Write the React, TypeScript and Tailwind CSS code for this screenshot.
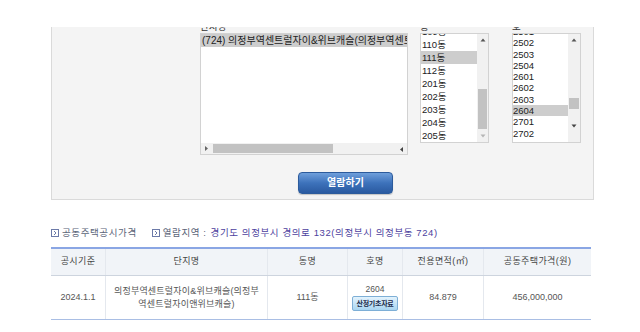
const dongs = ["109동", "110동", "111동", "112동", "201동", "202동", "203동", "204동", "205동", "206동"];
const hos = ["2501", "2502", "2503", "2504", "2601", "2602", "2603", "2604", "2701", "2702", "2703", "2704"];

function UpArrow({ color = "#555" }: { color?: string }) {
  return (
    <svg width="6" height="4" viewBox="0 0 6 4">
      <polygon points="3,0.5 5.5,3.5 0.5,3.5" fill={color} />
    </svg>
  );
}

function DownArrow({ color = "#555" }: { color?: string }) {
  return (
    <svg width="6" height="4" viewBox="0 0 6 4">
      <polygon points="0.5,0.5 5.5,0.5 3,3.5" fill={color} />
    </svg>
  );
}

function BoxIcon() {
  return (
    <svg width="8" height="8" viewBox="0 0 8 8" className="shrink-0">
      <rect x="0.5" y="0.5" width="7" height="7" fill="#fff" stroke="#6c7aa8" />
      <polyline points="3,2 5,4 3,6" fill="none" stroke="#6c7aa8" strokeWidth="1" />
    </svg>
  );
}

export default function App() {
  return (
    <div className="w-[640px] h-[332px] overflow-hidden bg-white font-['Liberation_Sans','Noto_Sans_CJK_KR',sans-serif]">
      <div className="h-[27px]" />

      {/* search panel */}
      <div className="ml-[51px] w-[543px] h-[173px] bg-[#f4f4f4] border-x border-b border-[#dadada] overflow-hidden">
        <div className="flex pl-[148px] -mt-[6px]">
          {/* 단지명 */}
          <div className="w-[208px]">
            <div className="h-[12px] text-[9.5px] leading-[12px] text-[#333]">단지명</div>
            <div className="h-[122px] border border-[#d2d2d2] bg-white">
              <div className="h-[109px] overflow-hidden">
                <div className="h-[13px] bg-[#cdcdcd] text-[10px] leading-[13px] text-[#222] whitespace-nowrap pl-px">
                  (724) 의정부역센트럴자이&amp;위브캐슬(의정부역센트럴자이앤위브캐슬)
                </div>
              </div>
              <div className="h-[11px] bg-[#f1f1f1] flex items-center">
                <div className="w-[11px] flex justify-center -rotate-90">
                  <DownArrow color="#666" />
                </div>
                <div className="ml-[1px] w-[120px] h-[9px] bg-[#c2c2c2]" />
                <div className="flex-1" />
                <div className="w-[11px] flex justify-center rotate-90">
                  <DownArrow color="#444" />
                </div>
              </div>
            </div>
          </div>

          {/* 동 */}
          <div className="ml-[12px] w-[69px]">
            <div className="h-[12px] text-[9.5px] leading-[12px] text-[#333]">동</div>
            <div className="h-[110px] border border-[#d2d2d2] bg-white flex">
              <div className="flex-1 overflow-hidden">
                <div className="-mt-[9px]">
                  {dongs.map((d) => (
                    <div
                      key={d}
                      className={`h-[13px] text-[9.5px] leading-[13px] text-[#222] pl-px ${
                        d === "111동" ? "bg-[#cdcdcd]" : ""
                      }`}
                    >
                      {d}
                    </div>
                  ))}
                </div>
              </div>
              <div className="w-[11px] bg-[#f1f1f1] flex flex-col items-center">
                <div className="h-[12px] flex items-center">
                  <UpArrow color="#555" />
                </div>
                <div className="mt-[43px] w-[9px] h-[40px] bg-[#c2c2c2]" />
                <div className="flex-1 flex items-center">
                  <DownArrow color="#b5b5b5" />
                </div>
              </div>
            </div>
          </div>

          {/* 호 */}
          <div className="ml-[23px] w-[69px]">
            <div className="h-[12px] text-[9.5px] leading-[12px] text-[#333]">호</div>
            <div className="h-[110px] border border-[#d2d2d2] bg-white flex">
              <div className="flex-1 overflow-hidden">
                <div className="-mt-[8.1px]">
                  {hos.map((h) => (
                    <div
                      key={h}
                      className={`h-[11.3px] text-[9.5px] leading-[11.3px] text-[#222] ${
                        h === "2604" ? "bg-[#cdcdcd]" : ""
                      }`}
                    >
                      {h}
                    </div>
                  ))}
                </div>
              </div>
              <div className="w-[12px] bg-[#f1f1f1] flex flex-col items-center">
                <div className="h-[12px] flex items-center">
                  <UpArrow color="#555" />
                </div>
                <div className="mt-[52px] w-[10px] h-[11px] bg-[#c2c2c2]" />
                <div className="flex-1 flex items-center">
                  <DownArrow color="#444" />
                </div>
              </div>
            </div>
          </div>
        </div>

        <div className="pl-[246px] mt-[14px]">
          <button className="w-[95px] h-[22px] rounded-[4px] border border-[#2c5b9c] bg-gradient-to-b from-[#6f9fdb] via-[#3d72bb] to-[#2a5aa0] text-white text-[10px] font-bold leading-[20px] shadow-[0_1px_1px_rgba(0,0,0,0.2)]">
            열람하기
          </button>
        </div>
      </div>

      {/* info line */}
      <div className="mt-[27px] ml-[51px] h-[12px] flex items-center text-[9.5px] leading-[12px] tracking-[0.6px]">
        <BoxIcon />
        <span className="ml-[3px] text-[#5b6478]">공동주택공시가격</span>
        <span className="ml-[15px]">
          <BoxIcon />
        </span>
        <span className="ml-[3px] text-[#5b6478]">열람지역 :</span>
        <span className="ml-[4px] text-[#4d3f9e]">경기도 의정부시 경의로 132(의정부시 의정부동 724)</span>
      </div>

      {/* result table */}
      <div className="mt-[8px] ml-[51px] w-[540px] border-t-2 border-[#8aa6e4]">
        <div className="grid grid-cols-[54px_162px_80px_55px_81px_108px] h-[27px] bg-[#f1f4f8] border-b border-[#cdd4de] text-[9px] tracking-[0.4px] text-[#444]">
          <div className="flex items-center justify-center">공시기준</div>
          <div className="flex items-center justify-center border-l border-[#e4e8ee]">단지명</div>
          <div className="flex items-center justify-center border-l border-[#e4e8ee]">동명</div>
          <div className="flex items-center justify-center border-l border-[#e4e8ee]">호명</div>
          <div className="flex items-center justify-center border-l border-[#e4e8ee]">전용면적(㎡)</div>
          <div className="flex items-center justify-center border-l border-[#e4e8ee]">공동주택가격(원)</div>
        </div>
        <div className="grid grid-cols-[54px_162px_80px_55px_81px_108px] h-[44px] border-b border-[#a9bee4] text-[9px] text-[#555]">
          <div className="flex items-center justify-center">2024.1.1</div>
          <div className="flex items-center justify-center border-l border-[#e4e8ee] text-center leading-[13px] tracking-[0.2px] whitespace-nowrap">
            <span>
              의정부역센트럴자이&amp;위브캐슬(의정부
              <br />
              역센트럴자이앤위브캐슬)
            </span>
          </div>
          <div className="flex items-center justify-center border-l border-[#e4e8ee]">111동</div>
          <div className="flex flex-col items-center justify-center border-l border-[#e4e8ee]">
            <div className="text-[8.5px] leading-[10px]">2604</div>
            <div className="mt-[2px] w-[46px] h-[15px] rounded-[2px] border border-[#7eafd6] bg-gradient-to-b from-[#e3f3fd] to-[#a9d5f1] flex items-center justify-center text-[7px] font-bold tracking-[-0.3px] text-[#1d2c4c] leading-none">
              산정기초자료
            </div>
          </div>
          <div className="flex items-center justify-center border-l border-[#e4e8ee]">84.879</div>
          <div className="flex items-center justify-center border-l border-[#e4e8ee]">456,000,000</div>
        </div>
      </div>
    </div>
  );
}
